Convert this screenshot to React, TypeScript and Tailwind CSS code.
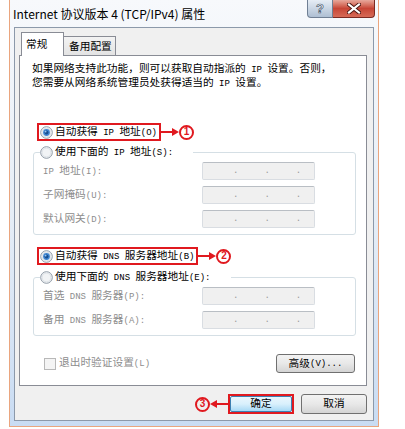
import React from "react";

const RED = "#e0191f";

// SimSun-style text: half-width latin runs are set a bit smaller than the CJK
const T = ({ s }: { s: string }) => (
  <>
    {s.split(/([\x20-\x7e]+)/).map((part, i) =>
      /^[\x20-\x7e]+$/.test(part) ? (
        <span key={i} className="text-[9px]">
          {part}
        </span>
      ) : (
        <React.Fragment key={i}>{part}</React.Fragment>
      )
    )}
  </>
);

const Radio = ({ checked }: { checked?: boolean }) => (
  <svg width="13" height="13" viewBox="0 0 13 13" className="shrink-0">
    <circle cx="6.5" cy="6.5" r="5.8" fill="#f1f3f5" stroke="#8e99a5" strokeWidth="1" />
    <circle cx="6.5" cy="6.5" r="4.4" fill="none" stroke="#dde2e7" strokeWidth="1" />
    {checked && (
      <>
        <circle cx="6.5" cy="6.5" r="3.4" fill="#3f86d2" />
        <circle cx="6.5" cy="6.5" r="2" fill="#174f91" />
        <circle cx="5.6" cy="5.6" r="0.9" fill="#9cc8f2" />
      </>
    )}
  </svg>
);

const Arrow = ({ left }: { left?: boolean }) => (
  <svg width="18" height="10" viewBox="0 0 18 10" className="shrink-0">
    {left ? (
      <>
        <line x1="6" y1="5" x2="18" y2="5" stroke={RED} strokeWidth="2" />
        <polygon points="0,5 7,1 7,9" fill={RED} />
      </>
    ) : (
      <>
        <line x1="0" y1="5" x2="12" y2="5" stroke={RED} strokeWidth="2" />
        <polygon points="18,5 11,1 11,9" fill={RED} />
      </>
    )}
  </svg>
);

const Circled = ({ n }: { n: number }) => (
  <span className="flex h-[15px] w-[15px] shrink-0 items-center justify-center rounded-full border-2 border-[#e0191f] font-['Liberation_Sans',sans-serif] text-[10px] font-bold leading-none text-[#e0191f]">
    {n}
  </span>
);

const IpBox = () => (
  <div className="flex h-[18px] w-[113px] items-end rounded-[2px] border border-[#d9dde2] border-t-[#b9bec4] bg-[#f0f0f0] pb-[3px] text-[9px] leading-none text-[#9a9a9a]">
    <span className="ml-[30px]">.</span>
    <span className="ml-[26px]">.</span>
    <span className="ml-[26px]">.</span>
  </div>
);

const FieldRow = ({ label }: { label: string }) => (
  <div className="flex items-center pl-[3px]">
    <span className="w-[159px] text-[#8d8d8d]">
      <T s={label} />
    </span>
    <IpBox />
  </div>
);

const Group = ({ title, rows }: { title: string; rows: string[] }) => (
  <fieldset className="ml-[13px] w-[323px] rounded-[3px] border border-[#d5dfe5] pb-[6px] pl-[6px]">
    <legend className="pr-[20px]">
      <span className="flex h-[14px] items-center gap-[2px]">
        <Radio />
        <span>
          <T s={title} />
        </span>
      </span>
    </legend>
    <div className="mt-[3px] flex flex-col gap-[6px]">
      {rows.map((r) => (
        <FieldRow key={r} label={r} />
      ))}
    </div>
  </fieldset>
);

const Marked = ({ text, n }: { text: string; n: number }) => (
  <div className="ml-[17px] flex items-center">
    <div className="flex h-[18px] items-center gap-[2px] border-2 border-[#e0191f] pl-[1px] pr-[2px]">
      <Radio checked />
      <span>
        <T s={text} />
      </span>
    </div>
    <Arrow />
    <Circled n={n} />
  </div>
);

const App = () => {
  return (
    <div className="h-[429px] w-[405px] overflow-hidden bg-white">
      <div className="ml-[9px] flex h-[427px] w-[370px] flex-col border border-t-0 border-[#eaa57e] bg-gradient-to-b from-[#f7f9fc] via-[#e6eef7] to-[#c9dcf3]">
        {/* title bar */}
        <div className="flex h-[27px] shrink-0 items-start justify-between pl-[3px] pr-[3px]">
          <span className="self-center font-['Noto_Sans_CJK_SC',sans-serif] text-[12px] leading-none text-black">
            Internet 协议版本 4 (TCP/IPv4) 属性
          </span>
          <div className="flex">
            <div className="flex h-[18px] w-[26px] items-center justify-center rounded-bl-[4px] border border-t-0 border-[#6f7f94] bg-gradient-to-b from-[#e6edf5] to-[#aebfd3] font-['Liberation_Sans',sans-serif] text-[13px] font-bold leading-none text-white [-webkit-text-stroke:0.7px_#44546a]">
              ?
            </div>
            <div className="flex h-[18px] w-[42px] items-center justify-center rounded-br-[4px] border border-l-0 border-t-0 border-[#7b2a22] bg-gradient-to-b from-[#e7a89c] via-[#c74536] to-[#d66a57]">
              <svg width="14" height="11" viewBox="0 0 14 11">
                <path d="M2 1.5 L12 9.5 M12 1.5 L2 9.5" stroke="#4a1510" strokeWidth="4" strokeLinecap="square" />
                <path d="M2 1.5 L12 9.5 M12 1.5 L2 9.5" stroke="#ffffff" strokeWidth="2.2" strokeLinecap="square" />
              </svg>
            </div>
          </div>
        </div>

        {/* client area */}
        <div className="mx-[4px] mb-[5px] flex flex-1 flex-col border border-[#8c99aa] bg-[#f0f0f0] font-['Liberation_Mono','Noto_Sans_CJK_SC',monospace] text-[10.7px] leading-[14px] text-black">
          {/* tabs */}
          <div className="flex h-[27px] shrink-0 items-end pl-[6px]">
            <div className="relative z-10 -mb-[1px] h-[24px] w-[43px] border border-b-0 border-[#898c95] bg-white pl-[4px] pt-[5px]">
              常规
            </div>
            <div className="h-[19px] w-[52px] border border-b-0 border-l-0 border-[#898c95] bg-gradient-to-b from-[#f3f3f3] to-[#e3e3e3] pl-[5px] pt-[3px]">
              备用配置
            </div>
          </div>

          {/* panel */}
          <div className="ml-[4px] flex h-[331px] w-[348px] flex-col border border-[#898c95] bg-white">
            <div className="ml-[12px] mt-[7px] leading-[13px]">
              <div>
                <T s="如果网络支持此功能，则可以获取自动指派的 IP 设置。否则，" />
              </div>
              <div>
                <T s="您需要从网络系统管理员处获得适当的 IP 设置。" />
              </div>
            </div>

            <div className="mt-[32px]">
              <Marked text="自动获得 IP 地址(O)" n={1} />
            </div>
            <div className="mt-[4px]">
              <Group title="使用下面的 IP 地址(S):" rows={["IP 地址(I):", "子网掩码(U):", "默认网关(D):"]} />
            </div>

            <div className="mt-[12px]">
              <Marked text="自动获得 DNS 服务器地址(B)" n={2} />
            </div>
            <div className="mt-[5px]">
              <Group title="使用下面的 DNS 服务器地址(E):" rows={["首选 DNS 服务器(P):", "备用 DNS 服务器(A):"]} />
            </div>

            <div className="ml-[24px] mr-[11px] mt-[18px] flex items-center justify-between">
              <div className="flex items-center gap-[3px] text-[#8d8d8d]">
                <span className="h-[12px] w-[12px] border border-[#b8b8b8] bg-[#f4f4f4]" />
                <span>
                  <T s="退出时验证设置(L)" />
                </span>
              </div>
              <button className="flex h-[19px] w-[79px] items-center justify-center rounded-[3px] border border-[#707070] bg-gradient-to-b from-[#f3f3f3] via-[#e8e8e8] to-[#d4d4d4] text-black">
                <T s="高级(V)..." />
              </button>
            </div>
          </div>

          {/* bottom buttons */}
          <div className="mt-[8px] flex w-[352px] items-center justify-end">
            <Circled n={3} />
            <Arrow left />
            <div className="flex h-[20px] w-[66px] items-center justify-center border-2 border-[#e0191f]">
              <button className="flex h-[16px] w-[62px] items-center justify-center rounded-[2px] border border-[#3c7fb1] bg-gradient-to-b from-[#eaf6fd] via-[#d9f0fc] to-[#a7d9f5] text-black">
                确定
              </button>
            </div>
            <button className="ml-[7px] flex h-[20px] w-[66px] items-center justify-center rounded-[3px] border border-[#707070] bg-gradient-to-b from-[#f3f3f3] via-[#e8e8e8] to-[#d4d4d4] text-black">
              取消
            </button>
          </div>
        </div>
      </div>
    </div>
  );
};

export default App;
